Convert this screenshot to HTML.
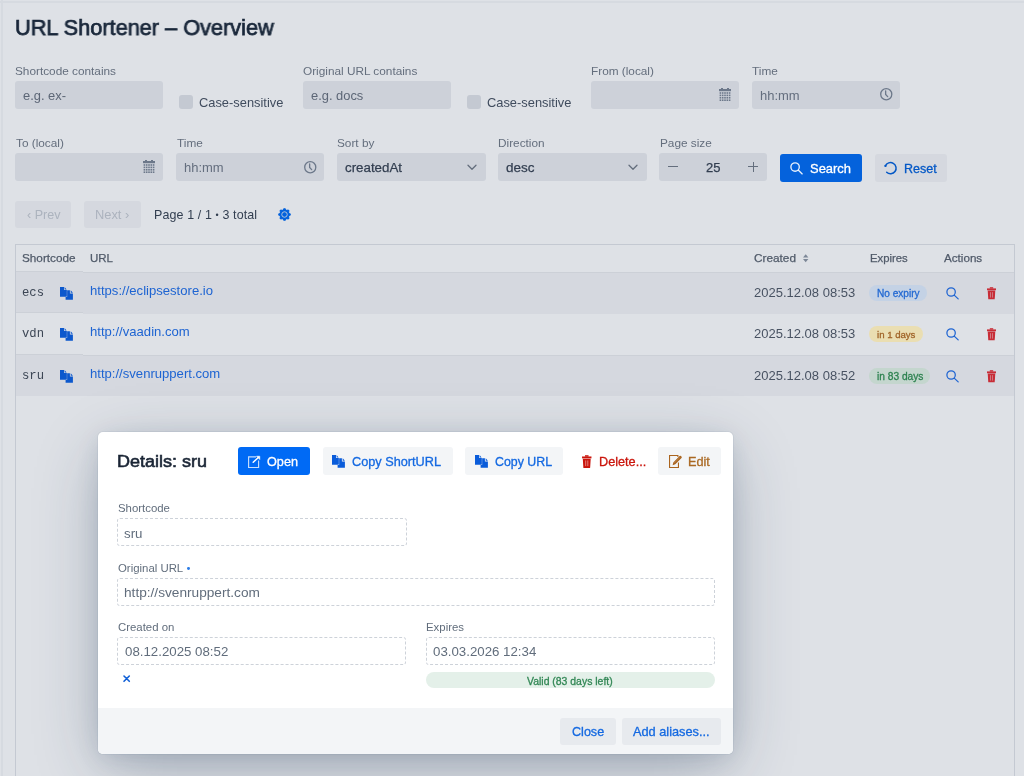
<!DOCTYPE html>
<html><head><meta charset="utf-8"><title>URL Shortener – Overview</title>
<style>
html,body{margin:0;padding:0;}
body{width:1024px;height:776px;overflow:hidden;position:relative;background:rgb(222,225,230);font-family:"Liberation Sans",sans-serif;}
.t{position:absolute;line-height:1;white-space:nowrap;will-change:transform;}
.b{position:absolute;box-sizing:border-box;}
.b[style*="dashed"]{box-sizing:content-box;}
.i{position:absolute;overflow:visible;}
.badge{position:absolute;box-sizing:border-box;border-radius:8px;font-weight:bold;font-size:9.5px;line-height:17.6px;text-align:center;white-space:nowrap;will-change:transform;}
</style></head><body>
<div class="b" style="left:0px;top:1px;width:1024px;height:2px;background:rgb(214,218,224);"></div>
<div class="b" style="left:1px;top:0px;width:2px;height:776px;background:rgb(214,218,224);"></div>
<div class="t" style="left:15.00px;top:17px;font-size:22px;color:rgb(25,39,58);-webkit-text-stroke:0.75px currentColor;transform:scaleX(0.987);transform-origin:0 0;">URL Shortener – Overview</div>
<div class="t" style="left:15.00px;top:66px;font-size:11.8px;color:rgb(100,110,125);">Shortcode contains</div>
<div class="b" style="left:15px;top:81px;width:148px;height:28px;background:rgb(205,209,217);border-radius:3px;"></div>
<div class="t" style="left:22.50px;top:90px;font-size:12.9px;color:rgb(92,102,118);">e.g. ex-</div>
<div class="b" style="left:179px;top:95px;width:14px;height:14px;background:rgb(196,201,210);border-radius:3px;"></div>
<div class="t" style="left:199.00px;top:97px;font-size:12.87px;color:rgb(64,76,94);">Case-sensitive</div>
<div class="t" style="left:303.00px;top:66px;font-size:11.8px;color:rgb(100,110,125);">Original URL contains</div>
<div class="b" style="left:303px;top:81px;width:148px;height:28px;background:rgb(205,209,217);border-radius:3px;"></div>
<div class="t" style="left:310.50px;top:90px;font-size:12.9px;color:rgb(92,102,118);">e.g. docs</div>
<div class="b" style="left:467px;top:95px;width:14px;height:14px;background:rgb(196,201,210);border-radius:3px;"></div>
<div class="t" style="left:487.00px;top:97px;font-size:12.87px;color:rgb(64,76,94);">Case-sensitive</div>
<div class="t" style="left:591.00px;top:66px;font-size:11.8px;color:rgb(100,110,125);">From (local)</div>
<div class="b" style="left:591px;top:81px;width:148px;height:28px;background:rgb(205,209,217);border-radius:3px;"></div>
<svg class="i" style="left:719px;top:88px;" width="12" height="13" viewBox="0 0 12 13"><g fill="rgb(108,120,138)"><rect x="0" y="1" width="12" height="2.2"/><rect x="2" y="0" width="2" height="1.5"/><rect x="8" y="0" width="2" height="1.5"/><rect x="0.60" y="4.20" width="1.6" height="1.6"/><rect x="0.60" y="6.60" width="1.6" height="1.6"/><rect x="0.60" y="9.00" width="1.6" height="1.6"/><rect x="0.60" y="11.40" width="1.6" height="1.6"/><rect x="2.90" y="4.20" width="1.6" height="1.6"/><rect x="2.90" y="6.60" width="1.6" height="1.6"/><rect x="2.90" y="9.00" width="1.6" height="1.6"/><rect x="2.90" y="11.40" width="1.6" height="1.6"/><rect x="5.20" y="4.20" width="1.6" height="1.6"/><rect x="5.20" y="6.60" width="1.6" height="1.6"/><rect x="5.20" y="9.00" width="1.6" height="1.6"/><rect x="5.20" y="11.40" width="1.6" height="1.6"/><rect x="7.50" y="4.20" width="1.6" height="1.6"/><rect x="7.50" y="6.60" width="1.6" height="1.6"/><rect x="7.50" y="9.00" width="1.6" height="1.6"/><rect x="7.50" y="11.40" width="1.6" height="1.6"/><rect x="9.80" y="4.20" width="1.6" height="1.6"/><rect x="9.80" y="6.60" width="1.6" height="1.6"/><rect x="9.80" y="9.00" width="1.6" height="1.6"/><rect x="9.80" y="11.40" width="1.6" height="1.6"/></g></svg>
<div class="t" style="left:752.20px;top:66px;font-size:11.8px;color:rgb(100,110,125);">Time</div>
<div class="b" style="left:752px;top:81px;width:148px;height:28px;background:rgb(205,209,217);border-radius:3px;"></div>
<div class="t" style="left:759.50px;top:89px;font-size:12.99px;color:rgb(100,110,126);">hh:mm</div>
<svg class="i" style="left:880px;top:88.4px;" width="12.5" height="12.5" viewBox="0 0 12.4 12.4"><g fill="none" stroke="rgb(108,120,138)" stroke-width="1.3"><circle cx="6.2" cy="6.2" r="5.5"/><path d="M5.6 2.8V6.4L7.6 8.6" stroke-linecap="round"/></g></svg>
<div class="t" style="left:15.50px;top:138px;font-size:11.8px;color:rgb(100,110,125);">To (local)</div>
<div class="b" style="left:15px;top:153px;width:148px;height:28px;background:rgb(205,209,217);border-radius:3px;"></div>
<svg class="i" style="left:143px;top:160px;" width="12" height="13" viewBox="0 0 12 13"><g fill="rgb(108,120,138)"><rect x="0" y="1" width="12" height="2.2"/><rect x="2" y="0" width="2" height="1.5"/><rect x="8" y="0" width="2" height="1.5"/><rect x="0.60" y="4.20" width="1.6" height="1.6"/><rect x="0.60" y="6.60" width="1.6" height="1.6"/><rect x="0.60" y="9.00" width="1.6" height="1.6"/><rect x="0.60" y="11.40" width="1.6" height="1.6"/><rect x="2.90" y="4.20" width="1.6" height="1.6"/><rect x="2.90" y="6.60" width="1.6" height="1.6"/><rect x="2.90" y="9.00" width="1.6" height="1.6"/><rect x="2.90" y="11.40" width="1.6" height="1.6"/><rect x="5.20" y="4.20" width="1.6" height="1.6"/><rect x="5.20" y="6.60" width="1.6" height="1.6"/><rect x="5.20" y="9.00" width="1.6" height="1.6"/><rect x="5.20" y="11.40" width="1.6" height="1.6"/><rect x="7.50" y="4.20" width="1.6" height="1.6"/><rect x="7.50" y="6.60" width="1.6" height="1.6"/><rect x="7.50" y="9.00" width="1.6" height="1.6"/><rect x="7.50" y="11.40" width="1.6" height="1.6"/><rect x="9.80" y="4.20" width="1.6" height="1.6"/><rect x="9.80" y="6.60" width="1.6" height="1.6"/><rect x="9.80" y="9.00" width="1.6" height="1.6"/><rect x="9.80" y="11.40" width="1.6" height="1.6"/></g></svg>
<div class="t" style="left:176.80px;top:138px;font-size:11.8px;color:rgb(100,110,125);">Time</div>
<div class="b" style="left:176px;top:153px;width:148px;height:28px;background:rgb(205,209,217);border-radius:3px;"></div>
<div class="t" style="left:183.75px;top:161px;font-size:12.99px;color:rgb(100,110,126);">hh:mm</div>
<svg class="i" style="left:304px;top:160.5px;" width="12.5" height="12.5" viewBox="0 0 12.4 12.4"><g fill="none" stroke="rgb(108,120,138)" stroke-width="1.3"><circle cx="6.2" cy="6.2" r="5.5"/><path d="M5.6 2.8V6.4L7.6 8.6" stroke-linecap="round"/></g></svg>
<div class="t" style="left:337.20px;top:138px;font-size:11.8px;color:rgb(100,110,125);">Sort by</div>
<div class="b" style="left:336.5px;top:153px;width:149.0px;height:28px;background:rgb(205,209,217);border-radius:3px;"></div>
<div class="t" style="left:344.80px;top:161px;font-size:13.32px;color:rgb(50,62,80);-webkit-text-stroke:0.25px currentColor;">createdAt</div>
<svg class="i" style="left:466.5px;top:163.5px;" width="10" height="6.5" viewBox="0 0 10 6"><path d="M1 1L5 5L9 1" fill="none" stroke="rgb(100,110,125)" stroke-width="1.3" stroke-linecap="round" stroke-linejoin="round"/></svg>
<div class="t" style="left:498.30px;top:138px;font-size:11.8px;color:rgb(100,110,125);">Direction</div>
<div class="b" style="left:498px;top:153px;width:148.5px;height:28px;background:rgb(205,209,217);border-radius:3px;"></div>
<div class="t" style="left:506.00px;top:161px;font-size:13.49px;color:rgb(50,62,80);-webkit-text-stroke:0.25px currentColor;">desc</div>
<svg class="i" style="left:627.8px;top:163.5px;" width="10" height="6.5" viewBox="0 0 10 6"><path d="M1 1L5 5L9 1" fill="none" stroke="rgb(100,110,125)" stroke-width="1.3" stroke-linecap="round" stroke-linejoin="round"/></svg>
<div class="t" style="left:659.50px;top:138px;font-size:11.8px;color:rgb(100,110,125);">Page size</div>
<div class="b" style="left:659px;top:153px;width:108px;height:28px;background:rgb(205,209,217);border-radius:3px;"></div>
<div class="b" style="left:667.7px;top:165.8px;width:10.099999999999909px;height:1.299999999999983px;background:rgb(100,110,125);"></div>
<div class="t" style="left:706.00px;top:161px;font-size:13.0px;color:rgb(50,62,80);-webkit-text-stroke:0.25px currentColor;">25</div>
<div class="b" style="left:748px;top:166px;width:10.299999999999955px;height:1.3000000000000114px;background:rgb(100,110,125);"></div>
<div class="b" style="left:752.5px;top:161.5px;width:1.2999999999999545px;height:10.300000000000011px;background:rgb(100,110,125);"></div>
<div class="b" style="left:780px;top:154px;width:82px;height:28px;background:rgb(4,98,220);border-radius:3px;"></div>
<svg class="i" style="left:790.3px;top:161.8px;" width="13" height="13" viewBox="0 0 13 13"><g fill="none" stroke="rgba(255,255,255,0.9)" stroke-width="1.35"><circle cx="5.1" cy="5.0" r="4.2"/><path d="M8.2 8.1L12.2 11.9" stroke-linecap="round"/></g></svg>
<div class="t" style="left:809.60px;top:163px;font-size:12.94px;color:#fff;-webkit-text-stroke:0.3px currentColor;">Search</div>
<div class="b" style="left:874.6px;top:154px;width:72.39999999999998px;height:28px;background:rgb(213,216,223);border-radius:3px;"></div>
<svg class="i" style="left:884.2px;top:162.2px;" width="13" height="13" viewBox="0 0 13 13"><path d="M1.35 4.01A5.6 5.6 0 1 1 2.68 10.3" fill="none" stroke="rgb(4,88,198)" stroke-width="1.5" stroke-linecap="round"/><circle cx="1.5" cy="3.95" r="1.15" fill="rgb(4,88,198)"/></svg>
<div class="t" style="left:904.00px;top:163px;font-size:12.52px;color:rgb(4,88,198);-webkit-text-stroke:0.3px currentColor;">Reset</div>
<div class="b" style="left:15px;top:200.6px;width:56px;height:27.400000000000006px;background:rgb(213,216,223);border-radius:3px;"></div>
<div class="t" style="left:26.50px;top:209px;font-size:12.56px;color:rgb(172,179,190);">‹ Prev</div>
<div class="b" style="left:84px;top:200.6px;width:57px;height:27.400000000000006px;background:rgb(213,216,223);border-radius:3px;"></div>
<div class="t" style="left:95.00px;top:209px;font-size:12.86px;color:rgb(172,179,190);">Next ›</div>
<div class="t" style="left:154.20px;top:209px;font-size:12.46px;color:rgb(50,62,80);letter-spacing:0.12px;">Page 1 / 1 <span style="font-size:9px;position:relative;top:-1px">•</span> 3 total</div>
<svg class="i" style="left:278.2px;top:208.1px;" width="13" height="13" viewBox="0 0 13 13"><path d="M5.43 2.03 L5.91 0.78 L7.09 0.78 L7.57 2.03 L8.90 2.58 L10.13 2.04 L10.96 2.87 L10.42 4.10 L10.97 5.43 L12.22 5.91 L12.22 7.09 L10.97 7.57 L10.42 8.90 L10.96 10.13 L10.13 10.96 L8.90 10.42 L7.57 10.97 L7.09 12.22 L5.91 12.22 L5.43 10.97 L4.10 10.42 L2.87 10.96 L2.04 10.13 L2.58 8.90 L2.03 7.57 L0.78 7.09 L0.78 5.91 L2.03 5.43 L2.58 4.10 L2.04 2.87 L2.87 2.04 L4.10 2.58Z" fill="rgb(4,98,220)" stroke="rgb(4,98,220)" stroke-width="1.1" stroke-linejoin="round"/><circle cx="6.5" cy="6.5" r="2.75" fill="none" stroke="rgb(205,209,217)" stroke-width="0.85"/></svg>
<div class="b" style="left:15px;top:244px;width:1000px;height:540px;border:1px solid rgb(196,201,210);"></div>
<div class="b" style="left:16px;top:272px;width:998px;height:1px;background:rgb(204,208,215);"></div>
<div class="b" style="left:16px;top:273px;width:998px;height:41px;background:rgb(213,216,223);"></div>
<div class="b" style="left:16px;top:355px;width:998px;height:1px;background:rgb(204,208,215);"></div>
<div class="b" style="left:16px;top:356px;width:998px;height:40px;background:rgb(213,216,223);"></div>
<div class="b" style="left:16px;top:271px;width:67px;height:1px;background:rgb(204,208,215);"></div>
<div class="b" style="left:16px;top:272px;width:67px;height:40px;background:rgb(213,216,223);"></div>
<div class="b" style="left:16px;top:312px;width:67px;height:1px;background:rgb(204,208,215);"></div>
<div class="b" style="left:16px;top:313px;width:67px;height:41px;background:rgb(222,225,230);"></div>
<div class="b" style="left:16px;top:354px;width:67px;height:1px;background:rgb(204,208,215);"></div>
<div class="b" style="left:16px;top:355px;width:67px;height:41px;background:rgb(213,216,223);"></div>
<div class="t" style="left:22.30px;top:252px;font-size:11.76px;color:rgb(80,90,105);-webkit-text-stroke:0.25px currentColor;">Shortcode</div>
<div class="t" style="left:89.90px;top:253px;font-size:11.5px;color:rgb(80,90,105);-webkit-text-stroke:0.25px currentColor;">URL</div>
<div class="t" style="left:754.40px;top:253px;font-size:11.8px;color:rgb(80,90,105);-webkit-text-stroke:0.25px currentColor;">Created</div>
<svg class="i" style="left:802.8px;top:254px;" width="5.4" height="8.6" viewBox="0 0 6 9"><path d="M3 0L6 3.6H0Z M3 9L0 5.4H6Z" fill="rgb(125,136,152)"/></svg>
<div class="t" style="left:869.80px;top:253px;font-size:11.31px;color:rgb(80,90,105);-webkit-text-stroke:0.25px currentColor;">Expires</div>
<div class="t" style="left:944.40px;top:252px;font-size:11.65px;color:rgb(80,90,105);-webkit-text-stroke:0.25px currentColor;">Actions</div>
<div class="t" style="left:22.00px;top:287px;font-size:12.22px;color:rgb(60,70,85);font-family:'Liberation Mono', monospace;">ecs</div>
<svg class="i" style="left:59.6px;top:287px;" width="13" height="13" viewBox="0 0 13 13"><g fill="rgb(12,88,205)"><path d="M5.6 3.3H9.9V6.6H12.9V12.8H5.6Z"/><path d="M10.7 3.3L12.9 5.8H10.7Z"/></g><path d="M0 0H3.9V3.1H6.6V9.5H0Z" fill="rgb(12,88,205)" stroke="rgb(213,216,223)" stroke-width="1.1" paint-order="stroke"/><path d="M0 0H3.9V3.1H6.6V9.5H0Z" fill="rgb(12,88,205)"/><path d="M4.6 0L6.6 2.4H4.6Z" fill="rgb(12,88,205)"/></svg>
<div class="t" style="left:89.90px;top:284px;font-size:13.1px;color:rgb(30,100,210);">https://eclipsestore.io</div>
<div class="t" style="left:754.40px;top:286px;font-size:13.0px;color:rgb(72,82,98);">2025.12.08 08:53</div>
<div class="b" style="left:869.0px;top:285.2px;width:57.799999999999955px;height:16.0px;background:rgb(196,210,229);border-radius:8px;"></div>
<div class="t" style="left:876.70px;top:289px;font-size:10.1px;color:rgb(35,105,210);-webkit-text-stroke:0.3px currentColor;">No expiry</div>
<svg class="i" style="left:946.4px;top:287px;" width="12.6" height="12.6" viewBox="0 0 12.6 12.6"><g fill="none" stroke="rgb(30,100,210)" stroke-width="1.25"><circle cx="5.1" cy="5.0" r="4.2"/><path d="M8.2 8.1L12.2 11.9" stroke-linecap="round"/></g></svg>
<svg class="i" style="left:986.6px;top:287px;" width="9" height="12.4" viewBox="0 0 9 12.4"><g fill="rgb(200,45,55)"><path d="M2.8 0.2H6.2V1.6H2.8Z" rx="0.5"/><path d="M0 1.4H9V3.2H0Z"/><path d="M0.7 3.6H8.3L7.7 12.3H1.3Z"/></g><path d="M3.5 5.2V10.6 M5.5 5.2V10.6" stroke="rgb(213,216,223)" stroke-width="0.8" opacity="0.55"/></svg>
<div class="t" style="left:22.00px;top:328px;font-size:12.22px;color:rgb(60,70,85);font-family:'Liberation Mono', monospace;">vdn</div>
<svg class="i" style="left:59.6px;top:328px;" width="13" height="13" viewBox="0 0 13 13"><g fill="rgb(12,88,205)"><path d="M5.6 3.3H9.9V6.6H12.9V12.8H5.6Z"/><path d="M10.7 3.3L12.9 5.8H10.7Z"/></g><path d="M0 0H3.9V3.1H6.6V9.5H0Z" fill="rgb(12,88,205)" stroke="rgb(222,225,230)" stroke-width="1.1" paint-order="stroke"/><path d="M0 0H3.9V3.1H6.6V9.5H0Z" fill="rgb(12,88,205)"/><path d="M4.6 0L6.6 2.4H4.6Z" fill="rgb(12,88,205)"/></svg>
<div class="t" style="left:89.90px;top:325px;font-size:13.1px;color:rgb(30,100,210);">http://vaadin.com</div>
<div class="t" style="left:754.40px;top:327px;font-size:13.0px;color:rgb(72,82,98);">2025.12.08 08:53</div>
<div class="b" style="left:869.0px;top:326.2px;width:54.200000000000045px;height:16.0px;background:rgb(234,222,178);border-radius:8px;"></div>
<div class="t" style="left:876.70px;top:330px;font-size:9.6px;color:rgb(160,100,40);-webkit-text-stroke:0.3px currentColor;">in 1 days</div>
<svg class="i" style="left:946.4px;top:328px;" width="12.6" height="12.6" viewBox="0 0 12.6 12.6"><g fill="none" stroke="rgb(30,100,210)" stroke-width="1.25"><circle cx="5.1" cy="5.0" r="4.2"/><path d="M8.2 8.1L12.2 11.9" stroke-linecap="round"/></g></svg>
<svg class="i" style="left:986.6px;top:328px;" width="9" height="12.4" viewBox="0 0 9 12.4"><g fill="rgb(200,45,55)"><path d="M2.8 0.2H6.2V1.6H2.8Z" rx="0.5"/><path d="M0 1.4H9V3.2H0Z"/><path d="M0.7 3.6H8.3L7.7 12.3H1.3Z"/></g><path d="M3.5 5.2V10.6 M5.5 5.2V10.6" stroke="rgb(222,225,230)" stroke-width="0.8" opacity="0.55"/></svg>
<div class="t" style="left:22.00px;top:370px;font-size:12.22px;color:rgb(60,70,85);font-family:'Liberation Mono', monospace;">sru</div>
<svg class="i" style="left:59.6px;top:370px;" width="13" height="13" viewBox="0 0 13 13"><g fill="rgb(12,88,205)"><path d="M5.6 3.3H9.9V6.6H12.9V12.8H5.6Z"/><path d="M10.7 3.3L12.9 5.8H10.7Z"/></g><path d="M0 0H3.9V3.1H6.6V9.5H0Z" fill="rgb(12,88,205)" stroke="rgb(213,216,223)" stroke-width="1.1" paint-order="stroke"/><path d="M0 0H3.9V3.1H6.6V9.5H0Z" fill="rgb(12,88,205)"/><path d="M4.6 0L6.6 2.4H4.6Z" fill="rgb(12,88,205)"/></svg>
<div class="t" style="left:89.90px;top:367px;font-size:13.1px;color:rgb(30,100,210);">http://svenruppert.com</div>
<div class="t" style="left:754.40px;top:369px;font-size:13.0px;color:rgb(72,82,98);">2025.12.08 08:52</div>
<div class="b" style="left:869.0px;top:368.2px;width:61.299999999999955px;height:16.0px;background:rgb(196,214,206);border-radius:8px;"></div>
<div class="t" style="left:876.70px;top:372px;font-size:10.2px;color:rgb(45,130,80);-webkit-text-stroke:0.3px currentColor;">in 83 days</div>
<svg class="i" style="left:946.4px;top:370px;" width="12.6" height="12.6" viewBox="0 0 12.6 12.6"><g fill="none" stroke="rgb(30,100,210)" stroke-width="1.25"><circle cx="5.1" cy="5.0" r="4.2"/><path d="M8.2 8.1L12.2 11.9" stroke-linecap="round"/></g></svg>
<svg class="i" style="left:986.6px;top:370px;" width="9" height="12.4" viewBox="0 0 9 12.4"><g fill="rgb(200,45,55)"><path d="M2.8 0.2H6.2V1.6H2.8Z" rx="0.5"/><path d="M0 1.4H9V3.2H0Z"/><path d="M0.7 3.6H8.3L7.7 12.3H1.3Z"/></g><path d="M3.5 5.2V10.6 M5.5 5.2V10.6" stroke="rgb(213,216,223)" stroke-width="0.8" opacity="0.55"/></svg>
<div class="b" style="left:98px;top:432px;width:635px;height:321.5px;background:#fff;border-radius:5px;box-shadow:0 0 0 1px rgba(26,57,96,0.05),0 4px 24px -3px rgba(28,54,90,0.16),0 18px 64px -6px rgba(32,54,80,0.32);overflow:hidden;"><div style="position:absolute;left:0;right:0;bottom:0;height:45.6px;background:rgb(243,245,247);"></div></div>
<div class="t" style="left:117.30px;top:453px;font-size:17px;color:rgb(25,36,52);-webkit-text-stroke:0.6px currentColor;transform:scaleX(1.06);transform-origin:0 0;">Details: sru</div>
<div class="b" style="left:238px;top:447.2px;width:71.69999999999999px;height:28.100000000000023px;background:rgb(0,106,245);border-radius:3px;"></div>
<svg class="i" style="left:247.8px;top:455.7px;" width="12" height="12.5" viewBox="0 0 12 12.5"><path d="M8 0.9H0.6V11.45H10.6V4.4" fill="none" stroke="#fff" stroke-width="1.15" opacity="0.78"/><path d="M5.2 6.2L10.6 1.2" stroke="#fff" stroke-width="1.5" stroke-linecap="round"/><path d="M8.4 0.2H11.8V3.6Z" fill="#fff" stroke="#fff" stroke-width="0.5" stroke-linejoin="round"/></svg>
<div class="t" style="left:267.00px;top:456px;font-size:12.67px;color:#fff;-webkit-text-stroke:0.3px currentColor;">Open</div>
<div class="b" style="left:322.5px;top:447.2px;width:130.3px;height:28.100000000000023px;background:rgb(243,245,247);border-radius:3px;"></div>
<svg class="i" style="left:331.8px;top:455px;" width="13" height="13" viewBox="0 0 13 13"><g fill="rgb(10,92,218)"><path d="M5.6 3.3H9.9V6.6H12.9V12.8H5.6Z"/><path d="M10.7 3.3L12.9 5.8H10.7Z"/></g><path d="M0 0H3.9V3.1H6.6V9.5H0Z" fill="rgb(10,92,218)" stroke="rgb(243,245,247)" stroke-width="1.1" paint-order="stroke"/><path d="M0 0H3.9V3.1H6.6V9.5H0Z" fill="rgb(10,92,218)"/><path d="M4.6 0L6.6 2.4H4.6Z" fill="rgb(10,92,218)"/></svg>
<div class="t" style="left:351.70px;top:456px;font-size:12.71px;color:rgb(20,105,225);-webkit-text-stroke:0.3px currentColor;">Copy ShortURL</div>
<div class="b" style="left:464.6px;top:447.2px;width:98.29999999999995px;height:28.100000000000023px;background:rgb(243,245,247);border-radius:3px;"></div>
<svg class="i" style="left:475.2px;top:455px;" width="13" height="13" viewBox="0 0 13 13"><g fill="rgb(10,92,218)"><path d="M5.6 3.3H9.9V6.6H12.9V12.8H5.6Z"/><path d="M10.7 3.3L12.9 5.8H10.7Z"/></g><path d="M0 0H3.9V3.1H6.6V9.5H0Z" fill="rgb(10,92,218)" stroke="rgb(243,245,247)" stroke-width="1.1" paint-order="stroke"/><path d="M0 0H3.9V3.1H6.6V9.5H0Z" fill="rgb(10,92,218)"/><path d="M4.6 0L6.6 2.4H4.6Z" fill="rgb(10,92,218)"/></svg>
<div class="t" style="left:494.60px;top:456px;font-size:12.38px;color:rgb(20,105,225);-webkit-text-stroke:0.3px currentColor;">Copy URL</div>
<svg class="i" style="left:581.8px;top:455px;" width="9.5" height="13" viewBox="0 0 9 12.4"><g fill="rgb(202,21,12)"><path d="M2.8 0.2H6.2V1.6H2.8Z" rx="0.5"/><path d="M0 1.4H9V3.2H0Z"/><path d="M0.7 3.6H8.3L7.7 12.3H1.3Z"/></g><path d="M3.5 5.2V10.6 M5.5 5.2V10.6" stroke="#fff" stroke-width="0.8" opacity="0.55"/></svg>
<div class="t" style="left:599.00px;top:456px;font-size:12.7px;color:rgb(202,21,12);-webkit-text-stroke:0.3px currentColor;">Delete...</div>
<div class="b" style="left:658px;top:447.2px;width:62.5px;height:28.100000000000023px;background:rgb(243,245,247);border-radius:3px;"></div>
<svg class="i" style="left:668.5px;top:455px;" width="13" height="13" viewBox="0 0 13 13"><g fill="none" stroke="rgb(170,100,30)" stroke-width="1.1"><path d="M8.9 1.9V0.55H0.55V12.45H9.45V7.6"/></g><path d="M3.6 10.2L4.3 7.4L10.6 1.1Q11.3 0.5 12 1.1L12.6 1.7Q13.1 2.4 12.5 3.0L6.3 9.3Z" fill="rgb(170,100,30)"/><path d="M5.2 8.1L10.9 2.4" stroke="#f3f5f7" stroke-width="0.35" opacity="0.6"/></svg>
<div class="t" style="left:687.70px;top:456px;font-size:12.71px;color:rgb(170,105,35);-webkit-text-stroke:0.3px currentColor;">Edit</div>
<div class="t" style="left:117.50px;top:503px;font-size:11.4px;color:rgb(97,109,124);">Shortcode</div>
<div class="b" style="left:117px;top:517.8px;width:287.6px;height:26.200000000000045px;border:1px dashed rgb(205,210,217);border-radius:3px;"></div>
<div class="t" style="left:124.40px;top:527px;font-size:13.3px;color:rgb(97,109,124);">sru</div>
<div class="t" style="left:117.50px;top:563px;font-size:11.4px;color:rgb(97,109,124);">Original URL</div>
<div class="b" style="left:186.8px;top:567.4px;width:2.799999999999983px;height:2.800000000000068px;background:rgb(45,125,230);border-radius:50%;"></div>
<div class="b" style="left:117px;top:578.4px;width:596px;height:25.600000000000023px;border:1px dashed rgb(205,210,217);border-radius:3px;"></div>
<div class="t" style="left:124.40px;top:586px;font-size:13.66px;color:rgb(97,109,124);">http://svenruppert.com</div>
<div class="t" style="left:118.00px;top:622px;font-size:11.4px;color:rgb(97,109,124);">Created on</div>
<div class="b" style="left:117px;top:637.4px;width:287.3px;height:26.0px;border:1px dashed rgb(205,210,217);border-radius:3px;"></div>
<div class="t" style="left:125.30px;top:645px;font-size:13.28px;color:rgb(97,109,124);">08.12.2025 08:52</div>
<svg class="i" style="left:122.7px;top:675.4px;" width="7.3" height="7.3" viewBox="0 0 7.3 7.3"><path d="M1 1L6.3 6.3M6.3 1L1 6.3" stroke="rgb(15,95,215)" stroke-width="1.6" stroke-linecap="round"/></svg>
<div class="t" style="left:426.00px;top:622px;font-size:11.4px;color:rgb(97,109,124);">Expires</div>
<div class="b" style="left:425.5px;top:637.4px;width:287.5px;height:26.0px;border:1px dashed rgb(205,210,217);border-radius:3px;"></div>
<div class="t" style="left:433.00px;top:645px;font-size:13.28px;color:rgb(97,109,124);">03.03.2026 12:34</div>
<div class="b" style="left:425.5px;top:672.2px;width:289.5px;height:16.09999999999991px;background:rgb(228,240,233);border-radius:8px;"></div>
<div class="t" style="left:526.70px;top:677px;font-size:10.45px;color:rgb(50,135,85);-webkit-text-stroke:0.3px currentColor;">Valid (83 days left)</div>
<div class="b" style="left:560.2px;top:717.9px;width:55.39999999999998px;height:26.700000000000045px;background:rgb(231,234,238);border-radius:3px;"></div>
<div class="t" style="left:571.60px;top:726px;font-size:12.59px;color:rgb(20,105,225);-webkit-text-stroke:0.3px currentColor;">Close</div>
<div class="b" style="left:622px;top:717.9px;width:98.5px;height:26.700000000000045px;background:rgb(231,234,238);border-radius:3px;"></div>
<div class="t" style="left:633.00px;top:726px;font-size:12.76px;color:rgb(20,105,225);-webkit-text-stroke:0.3px currentColor;">Add aliases...</div>
</body></html>
